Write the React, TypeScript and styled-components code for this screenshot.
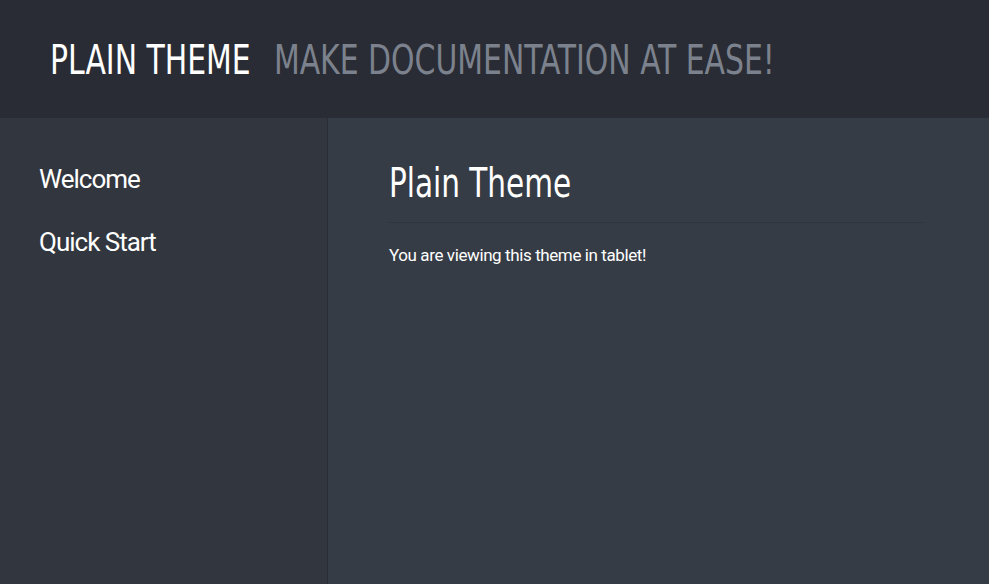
import React from "react";
import styled, { createGlobalStyle } from "styled-components";

const Global = createGlobalStyle`
  html, body { margin: 0; padding: 0; background: #363c45; }
  body { font-family: "Roboto", sans-serif; }
`;

const Page = styled.div`
  display: flex;
  flex-direction: column;
  height: 584px;
  overflow: hidden;
`;

const Header = styled.header`
  height: 118px;
  flex: none;
  background: #292c34;
  display: flex;
  align-items: center;
  padding-left: 50px;
  padding-top: 2px;
  box-sizing: border-box;
`;

const Condensed = styled.div<{ $scale: number }>`
  display: inline-flex;
  align-items: baseline;
  gap: 28px;
  white-space: nowrap;
  transform: scaleX(${(p) => p.$scale});
  transform-origin: left center;
`;

const Brand = styled.span`
  font-family: "DejaVu Sans Condensed", sans-serif;
  font-size: 40px;
  color: #ffffff;
`;

const Tagline = styled.span`
  font-family: "DejaVu Sans Condensed", sans-serif;
  font-size: 40px;
  color: #7c828d;
`;

const Body = styled.div`
  flex: 1;
  display: flex;
`;

const Sidebar = styled.nav`
  width: 328px;
  flex: none;
  background: #32363e;
  border-right: 1px solid #2b2e35;
  padding: 46px 0 0 39px;
  box-sizing: border-box;
  display: flex;
  flex-direction: column;
  gap: 32px;
`;

const NavLink = styled.a`
  font-family: "Roboto", sans-serif;
  font-size: 26px;
  letter-spacing: -1px;
  line-height: 31px;
  color: #ffffff;
  text-decoration: none;
`;

const Main = styled.main`
  flex: 1;
  padding: 42px 64px 0 61px;
`;

const Title = styled.h1`
  margin: 0;
  font-weight: 400;
  color: #ffffff;
  box-sizing: border-box;
  border-bottom: 1px solid #30353d;
  height: 63px;
`;

const TitleText = styled.span`
  display: inline-block;
  font-family: "DejaVu Sans Condensed", sans-serif;
  font-size: 40px;
  line-height: 46px;
  transform: scaleX(0.82);
  transform-origin: left center;
`;

const Text = styled.p`
  margin: 22px 0 0;
  font-family: "Roboto", sans-serif;
  font-size: 17px;
  letter-spacing: -0.4px;
  line-height: 20px;
  color: #ffffff;
`;

export default function App() {
  return (
    <>
      <Global />
      <Page>
        <Header>
          <Condensed $scale={0.83}>
            <Brand>PLAIN THEME</Brand>
            <Tagline>MAKE DOCUMENTATION AT EASE!</Tagline>
          </Condensed>
        </Header>
        <Body>
          <Sidebar>
            <NavLink href="#">Welcome</NavLink>
            <NavLink href="#">Quick Start</NavLink>
          </Sidebar>
          <Main>
            <Title>
              <TitleText>Plain Theme</TitleText>
            </Title>
            <Text>You are viewing this theme in tablet!</Text>
          </Main>
        </Body>
      </Page>
    </>
  );
}
